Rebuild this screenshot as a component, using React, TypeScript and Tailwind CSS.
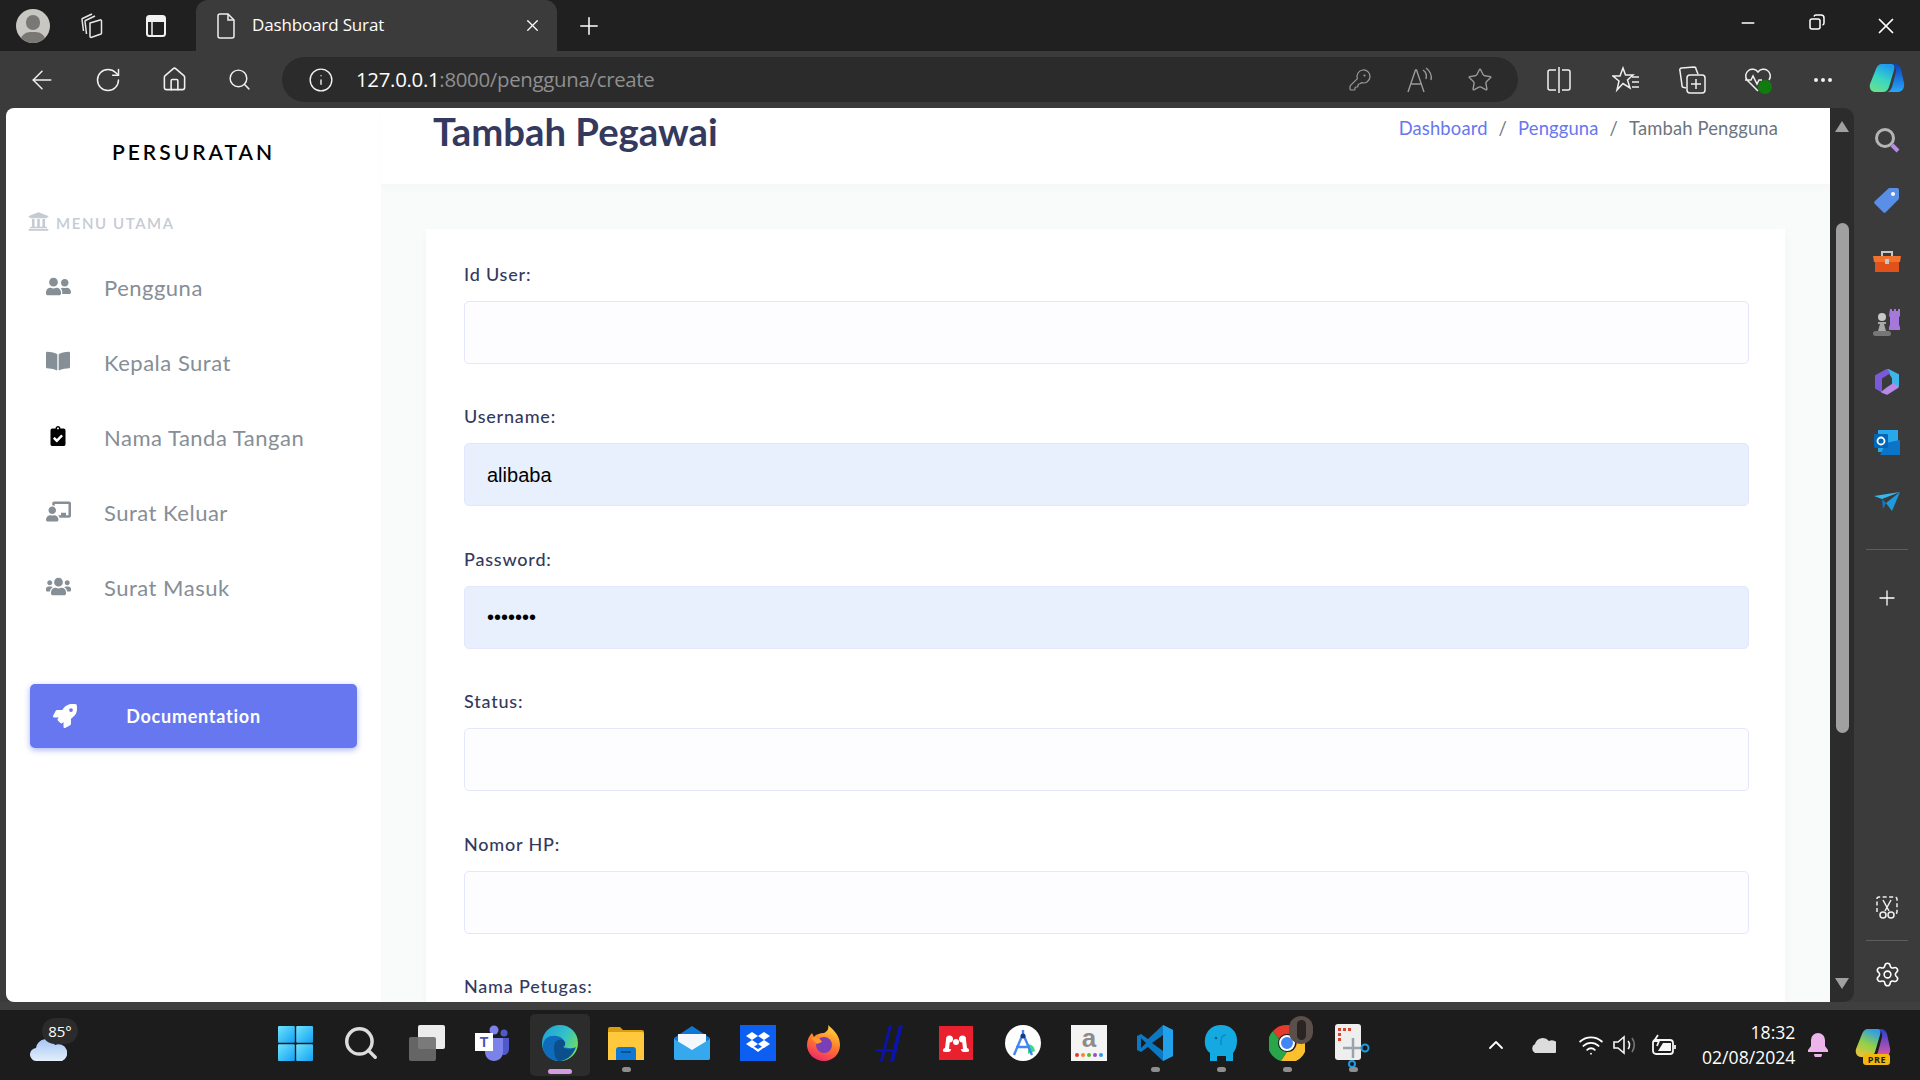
import { ArrowLeft, RotateCw, Home, Search, Info, Plus, X, Minus, Star, KeyRound, Ellipsis, ChevronUp, Wifi, Settings } from 'lucide-react';
import { FaUserFriends, FaBookOpen, FaClipboardCheck, FaChalkboardTeacher, FaUsers, FaRocket, FaUniversity } from 'react-icons/fa';
import type { ReactNode } from 'react';

const nunito = "font-['Lato','Noto_Sans',sans-serif]";
const segoe = "font-['Open_Sans','Noto_Sans',sans-serif]";

function WinLogo() {
    return (
        <svg width="35" height="35" viewBox="0 0 35 35">
            <defs>
                <linearGradient id="w1" x1="0" y1="0" x2="1" y2="1"><stop offset="0" stopColor="#6fe3fb" /><stop offset="1" stopColor="#12a0f5" /></linearGradient>
            </defs>
            <rect x="0" y="0" width="16.8" height="16.8" rx="1" fill="url(#w1)" />
            <rect x="18.2" y="0" width="16.8" height="16.8" rx="1" fill="url(#w1)" />
            <rect x="0" y="18.2" width="16.8" height="16.8" rx="1" fill="url(#w1)" />
            <rect x="18.2" y="18.2" width="16.8" height="16.8" rx="1" fill="url(#w1)" />
        </svg>
    );
}

function TeamsLogo() {
    return (
        <svg width="36" height="36" viewBox="0 0 36 36">
            <circle cx="19" cy="5" r="4.5" fill="#7b83eb" />
            <circle cx="29" cy="8" r="3.5" fill="#5059c9" />
            <path d="M24 13h10v11c0 4-3 6-5 6s-5-2-5-6z" fill="#5059c9" />
            <path d="M10 13h18v14c0 5-4 9-9 9s-9-4-9-9z" fill="#7b83eb" />
            <rect x="0" y="8" width="18" height="18" fill="#fff" />
            <text x="9" y="22" textAnchor="middle" fontSize="14" fontWeight="700" fontFamily="Liberation Sans, sans-serif" fill="#4b53bc">T</text>
        </svg>
    );
}

function EdgeLogo({ size = 36 }: { size?: number }) {
    return (
        <svg width={size} height={size} viewBox="0 0 36 36">
            <defs>
                <linearGradient id="e1" x1="0" y1="0" x2="1" y2="0.6"><stop offset="0" stopColor="#1b9ed8" /><stop offset="0.6" stopColor="#35c1c8" /><stop offset="1" stopColor="#6fdc5d" /></linearGradient>
            </defs>
            <circle cx="18" cy="18" r="18" fill="url(#e1)" />
            <path d="M1 20C2 11 11 9 18 12c6 3 6 9 2 10 6 1 10 2 14 0-3 9-10 14-18 14C8 36 0 29 1 20z" fill="#0f6cbd" />
            <path d="M12 22c0-6 5-9 9-7 3 2 3 6 0 7 3 3 8 3 12 1-3 8-10 13-16 13-4-1-5-8-5-14z" fill="#0c4f8c" />
        </svg>
    );
}

function FolderLogo() {
    return (
        <svg width="36" height="34" viewBox="0 0 36 34">
            <path d="M0 3a2 2 0 0 1 2-2h10l3 3h19a2 2 0 0 1 2 2v4H0z" fill="#d99e0b" />
            <path d="M0 6h34a2 2 0 0 1 2 2v26H0z" fill="#ffc83d" />
            <path d="M8 24a3 3 0 0 1 3-3h14a3 3 0 0 1 3 3v10H8z" fill="#0f78d4" />
            <rect x="13" y="25" width="10" height="2" fill="#0a4f8f" />
        </svg>
    );
}

function MailLogo() {
    return (
        <svg width="36" height="34" viewBox="0 0 36 34">
            <path d="M18 0 36 12v20a2 2 0 0 1-2 2H2a2 2 0 0 1-2-2V12z" fill="#0f78d4" />
            <path d="M4 8h28v12L18 26 4 20z" fill="#f2f8fd" />
            <path d="M0 13l18 11 18-11v19a2 2 0 0 1-2 2H2a2 2 0 0 1-2-2z" fill="#35a8ee" />
        </svg>
    );
}

function DropboxLogo() {
    return (
        <svg width="36" height="36" viewBox="0 0 36 36">
            <rect width="36" height="36" fill="#0d5ff2" />
            <path d="M12 7l6 4-6 4-6-4zM24 7l6 4-6 4-6-4zM12 15l6 4-6 4-6-4zM24 15l6 4-6 4-6-4zM18 24l6-3.5v2L18 27l-6-4.5v-2z" fill="#fff" />
        </svg>
    );
}

function FirefoxLogo() {
    return (
        <svg width="36" height="36" viewBox="0 0 36 36">
            <defs>
                <linearGradient id="f1" x1="0.7" y1="0" x2="0.3" y2="1"><stop offset="0" stopColor="#ffd93b" /><stop offset="0.5" stopColor="#ff7a2b" /><stop offset="1" stopColor="#f0266b" /></linearGradient>
            </defs>
            <path d="M22 0c6 5 12 11 12 20 0 9-7 16-16 16S1 29 1 20c0-5 2-9 5-12l2 4c2-3 7-4 10-4 4-2 5-5 4-8z" fill="url(#f1)" />
            <circle cx="18" cy="20" r="8" fill="#7a3fb8" />
            <path d="M5 13c5-2 9 0 11 4l-5 2z" fill="#ff9a2b" />
        </svg>
    );
}

function HashLogo() {
    return (
        <svg width="28" height="36" viewBox="0 0 28 36">
            <path d="M13 0h3L7 36H4zM23 0h4l-9 36h-4z" fill="#0a14a8" />
            <rect x="0" y="24" width="22" height="2.5" fill="#0a14a8" />
        </svg>
    );
}

function MendeleyLogo() {
    return (
        <svg width="34" height="34" viewBox="0 0 34 34">
            <rect width="34" height="34" fill="#e9202e" />
            <circle cx="17" cy="16" r="3" fill="#fff" />
            <circle cx="10.5" cy="13" r="3.5" fill="#fff" />
            <circle cx="23.5" cy="13" r="3.5" fill="#fff" />
            <path d="M7 14h4l-1 9h2c0 2-1 3-3 3H6c-2 0-2-1-2-2s1-2 2-2zM27 14h-4l1 9h-2c0 2 1 3 3 3h3c2 0 2-1 2-2s-1-2-2-2z" fill="#fff" />
        </svg>
    );
}

function StudioLogo() {
    return (
        <svg width="36" height="36" viewBox="0 0 36 36">
            <circle cx="18" cy="18" r="18" fill="#fff" />
            <path d="M23 19a8 8 0 0 1 7 7l-7 3z" fill="#3ddc84" />
            <path d="M18 5v6M17 11 9 30M19 11l8 19M11 22h14" stroke="#4285f4" strokeWidth="2.4" fill="none" />
            <circle cx="18" cy="11" r="2.5" fill="#1a3a7a" />
        </svg>
    );
}

function AmazonLogo() {
    return (
        <svg width="36" height="36" viewBox="0 0 36 36">
            <rect width="36" height="36" fill="#f4f4f4" />
            <text x="18" y="22" textAnchor="middle" fontSize="26" fontWeight="700" fontFamily="Liberation Sans, sans-serif" fill="#8c8c8c">a</text>
            <circle cx="6" cy="30" r="2" fill="#e8352b" />
            <circle cx="12" cy="30" r="2" fill="#f28c1e" />
            <circle cx="18" cy="30" r="2" fill="#5cb531" />
            <circle cx="24" cy="30" r="2" fill="#9a4bd0" />
            <circle cx="30" cy="30" r="2" fill="#2a9bea" />
        </svg>
    );
}

function VsCodeLogo() {
    return (
        <svg width="36" height="36" viewBox="0 0 36 36">
            <path d="M26 0 36 5v26l-10 5-15-14-7 5-4-2v-14l4-2 7 5z" fill="#0c78c2" />
            <path d="M26 0 36 5v26l-10 5z" fill="#22a0ea" />
            <path d="M26 10 15 18l11 8zM4 13v10l5-5z" fill="#1c1c1c" />
        </svg>
    );
}

function ElephantLogo() {
    return (
        <svg width="34" height="36" viewBox="0 0 34 36">
            <path d="M17 0c9 0 16 6 16 15 0 7-2 11-4 13v8h-7v-5h-9v5H6v-8C3 26 0 21 1 14 2 6 8 0 17 0z" fill="#14a9e0" />
            <circle cx="12" cy="13" r="1.3" fill="#0b5e80" />
            <path d="M22 10c-4 0-6 4-5 10" stroke="#0e8cc0" strokeWidth="1.5" fill="none" />
        </svg>
    );
}

function ChromeLogo() {
    return (
        <div className="relative w-[36px] h-[36px]">
            <svg width="36" height="36" viewBox="0 0 36 36">
                <path d="M18 0a18 18 0 0 1 16 9H18a9 9 0 0 0-8 5L4 6a18 18 0 0 1 14-6z" fill="#e33b2e" />
                <path d="M4 6l6 8a9 9 0 0 0 8 13l-6 9A18 18 0 0 1 4 6z" fill="#2aa64a" />
                <path d="M34 9a18 18 0 0 1-22 27l6-9a9 9 0 0 0 8-14z" fill="#fbc02d" />
                <circle cx="18" cy="18" r="7" fill="#4285f4" stroke="#fff" strokeWidth="2" />
            </svg>
            <div className="absolute -top-[9px] -right-[8px] w-[24px] h-[28px] rounded-full bg-[#5a4f4a] flex items-center justify-center">
                <div className="w-[9px] h-[20px] rounded-full bg-[#2a2422]" />
            </div>
        </div>
    );
}

function SnipLogo() {
    return (
        <svg width="36" height="44" viewBox="0 0 36 44" className="mt-[6px]">
            <rect x="0" y="0" width="26" height="36" rx="3" fill="#eeeeee" />
            <path d="M3 4h3v3H3zM8 4h3v3H8zM13 4h3v3h-3zM3 9h3v3H3zM3 14h3v3H3z" fill="#d9452a" />
            <path d="M18 14v20M8 24h18" stroke="#9aa3ad" strokeWidth="2.5" />
            <circle cx="30" cy="24" r="3.5" fill="none" stroke="#1e9be0" strokeWidth="2" />
            <circle cx="17" cy="40" r="3" fill="none" stroke="#1e9be0" strokeWidth="2" />
        </svg>
    );
}

function WeatherCloud() {
    return (
        <svg width="37" height="24" viewBox="0 0 37 24">
            <defs>
                <linearGradient id="c1" x1="0" y1="0" x2="0" y2="1"><stop offset="0" stopColor="#a5c6f5" /><stop offset="1" stopColor="#e4eefb" /></linearGradient>
            </defs>
            <path d="M7 23a6.5 6.5 0 0 1-1-13 10 10 0 0 1 19-3 8 8 0 0 1 7 16z" fill="url(#c1)" />
        </svg>
    );
}

function CopilotLogo({ pre }: { pre?: boolean }) {
    const id = pre ? 'cp2' : 'cp1';
    return (
        <svg width="36" height="36" viewBox="0 0 36 36">
            <defs>
                <linearGradient id={id} x1="0.6" y1="0" x2="0.2" y2="1">
                    <stop offset="0" stopColor={pre ? '#2f9de8' : '#1f9bee'} />
                    <stop offset="0.5" stopColor={pre ? '#8fd04a' : '#38d6c4'} />
                    <stop offset="1" stopColor={pre ? '#f0c23a' : '#6ee08a'} />
                </linearGradient>
                <linearGradient id={`${id}b`} x1="0.5" y1="0" x2="0.5" y2="1">
                    <stop offset="0" stopColor={pre ? '#2b3fd0' : '#0b3fc0'} />
                    <stop offset="1" stopColor={pre ? '#e458a8' : '#28a8f8'} />
                </linearGradient>
            </defs>
            <path d="M21 2h5c3 0 5 2 6 5l3 14c1 5-2 9-6 9H17c3 0 5-2 6-5l4-15c1-4-2-8-6-8z" fill={`url(#${id}b)`} />
            <path d="M13 2h9c3 0 4 2 3 6l-5 17c-1 3-3 5-6 5H6c-4 0-6-4-5-8L7 7c1-3 3-5 6-5z" fill={`url(#${id})`} />
        </svg>
    );
}

const taskbarApps: { icon: ReactNode; dot?: boolean; active?: boolean }[] = [
    { icon: <WinLogo /> },
    { icon: <Search size={38} strokeWidth={2.2} className="text-[#dcdcdc]" /> },
    {
        icon: (
            <div className="relative w-[36px] h-[36px]">
                <div className="absolute top-0 right-0 w-[27px] h-[24px] bg-[#ececec] rounded-[2px]" />
                <div className="absolute bottom-0 left-0 w-[27px] h-[24px] bg-[#6e6e6e]/90 rounded-[2px]" />
            </div>
        ),
    },
    { icon: <TeamsLogo /> },
    { icon: <EdgeLogo />, active: true },
    { icon: <FolderLogo />, dot: true },
    { icon: <MailLogo /> },
    { icon: <DropboxLogo /> },
    { icon: <FirefoxLogo /> },
    { icon: <HashLogo /> },
    { icon: <MendeleyLogo /> },
    { icon: <StudioLogo /> },
    { icon: <AmazonLogo /> },
    { icon: <VsCodeLogo />, dot: true },
    { icon: <ElephantLogo />, dot: true },
    { icon: <ChromeLogo />, dot: true },
    { icon: <SnipLogo />, dot: true },
];

const menuItems = [
    { label: 'Pengguna', icon: <FaUserFriends size={25} className="text-[#868e96]" /> },
    { label: 'Kepala Surat', icon: <FaBookOpen size={24} className="text-[#868e96]" /> },
    { label: 'Nama Tanda Tangan', icon: <FaClipboardCheck size={20} className="text-black" /> },
    { label: 'Surat Keluar', icon: <FaChalkboardTeacher size={25} className="text-[#868e96]" /> },
    { label: 'Surat Masuk', icon: <FaUsers size={25} className="text-[#868e96]" /> },
];

const fields = [
    { label: 'Id User:', value: '' },
    { label: 'Username:', value: 'alibaba', filled: true },
    { label: 'Password:', value: '•••••••', filled: true },
    { label: 'Status:', value: '' },
    { label: 'Nomor HP:', value: '' },
    { label: 'Nama Petugas:', value: '' },
];

function TabBar() {
    return (
        <div className={`h-[51px] bg-[#202020] flex items-center pl-[2px] text-white ${segoe}`}>
            <div className="w-[62px] flex justify-center">
                <div className="relative w-[34px] h-[34px] rounded-full bg-[#c9c7c2] overflow-hidden">
                    <div className="absolute left-[10px] top-[6px] w-[14px] h-[15px] rounded-full bg-[#7a7875]" />
                    <div className="absolute left-[4px] top-[23px] w-[26px] h-[20px] rounded-full bg-[#7a7875]" />
                </div>
            </div>
            <div className="w-[56px] flex justify-center">
                <svg width="26" height="26" viewBox="0 0 26 26" fill="none" stroke="#e6e6e6" strokeWidth="1.5">
                    <path d="M11 10l10-3a1 1 0 0 1 1.5 1v12a1 1 0 0 1-.5 1l-10 3.5a1 1 0 0 1-1-1z" />
                    <path d="M7.5 21 6 8.5a1 1 0 0 1 .5-1L16 3" />
                    <path d="M4.5 18 3 6.5a1 1 0 0 1 .5-1L13 1" />
                </svg>
            </div>
            <div className="w-[72px] flex justify-center">
                <svg width="24" height="24" viewBox="0 0 24 24" fill="none">
                    <rect x="3" y="2" width="18" height="20" rx="2.5" stroke="#f2f2f2" strokeWidth="2" />
                    <rect x="3" y="2" width="18" height="6" fill="#f2f2f2" />
                    <path d="M8 8v14" stroke="#f2f2f2" strokeWidth="1.5" />
                </svg>
            </div>
            <div className="ml-[4px] w-[361px] h-full bg-[#3b3b3b] rounded-t-[12px] flex items-center pl-[20px] pr-[15px]">
                <svg width="20" height="26" viewBox="0 0 20 26" fill="none" stroke="#eeeeee" strokeWidth="1.5">
                    <path d="M2 3a2 2 0 0 1 2-2h8l6 6v16a2 2 0 0 1-2 2H4a2 2 0 0 1-2-2z" />
                    <path d="M12 1v6h6" />
                </svg>
                <span className="ml-[16px] text-[17px] tracking-[-0.15px] -mt-[1px]">Dashboard Surat</span>
                <X size={19} strokeWidth={1.6} className="ml-auto" />
            </div>
            <div className="w-[64px] flex justify-center">
                <Plus size={28} strokeWidth={1.3} />
            </div>
            <div className="ml-auto flex">
                <div className="w-[69px] flex justify-center"><Minus size={20} strokeWidth={1.6} /></div>
                <div className="w-[69px] flex justify-center">
                    <svg width="18" height="18" viewBox="0 0 18 18" fill="none" stroke="#fff" strokeWidth="1.5">
                        <rect x="2" y="6" width="10" height="10" rx="2" />
                        <path d="M6 3.5A2 2 0 0 1 8 2h5a3 3 0 0 1 3 3v5a2 2 0 0 1-1.5 2" />
                    </svg>
                </div>
                <div className="w-[69px] flex justify-center"><X size={26} strokeWidth={1.6} /></div>
            </div>
        </div>
    );
}

function Toolbar() {
    return (
        <div className={`h-[57px] bg-[#3b3b3b] flex items-start pl-[9px] text-[#f0f0f0] ${segoe}`}>
            <div className="flex h-[45px] mt-[6px] items-center">
                <div className="w-[66px] flex justify-center"><ArrowLeft size={30} strokeWidth={1.2} /></div>
                <div className="w-[66px] flex justify-center"><RotateCw size={28} strokeWidth={1.3} /></div>
                <div className="w-[66px] flex justify-center"><Home size={27} strokeWidth={1.4} /></div>
                <div className="w-[66px] flex justify-center -ml-[1px]"><Search size={25} strokeWidth={1.4} /></div>
            </div>
            <div className="ml-[10px] mt-[6px] w-[1236px] h-[45px] rounded-full bg-[#2b2b2b] flex items-center pl-[26px] pr-[8px]">
                <Info size={26} strokeWidth={1.3} />
                <span className="ml-[22px] text-[20.4px] tracking-[-0.3px] text-[#8f8f8f]"><span className="text-white">127.0.0.1</span>:8000/pengguna/create</span>
                <div className="ml-auto flex items-center text-[#9a9a9a]">
                    <div className="w-[60px] flex justify-center"><KeyRound size={24} strokeWidth={1.2} /></div>
                    <div className="w-[60px] flex justify-center">
                        <svg width="28" height="26" viewBox="0 0 28 26" fill="none" stroke="#9a9a9a" strokeWidth="1.4">
                            <path d="M2 25 9.5 3h1L18 25M5 17h11" />
                            <path d="M17 3c3 2 4 5 3 9M20 1c4 3 6 7 5 12" />
                        </svg>
                    </div>
                    <div className="w-[60px] flex justify-center"><Star size={26} strokeWidth={1.3} /></div>
                </div>
            </div>
            <div className="ml-[7px] mt-[6px] h-[45px] flex items-center">
                <div className="w-[68px] flex justify-center">
                    <svg width="26" height="28" viewBox="0 0 26 28" fill="none" stroke="#f0f0f0" strokeWidth="1.5">
                        <path d="M10 4H4a2 2 0 0 0-2 2v16a2 2 0 0 0 2 2h6M16 4h6a2 2 0 0 1 2 2v16a2 2 0 0 1-2 2h-6M13 1v26" />
                    </svg>
                </div>
                <div className="w-[65px] flex justify-center">
                    <svg width="28" height="28" viewBox="0 0 28 28" fill="none" stroke="#f0f0f0" strokeWidth="1.5">
                        <path d="M11 2l2.5 7H21l-5.5 5 2.5 8-7-4.5L5 24l2-9-6-5h7z" />
                        <path d="M20 11h7M20 16h7M20 21h7" />
                    </svg>
                </div>
                <div className="w-[67px] flex justify-center">
                    <svg width="28" height="30" viewBox="0 0 28 30" fill="none" stroke="#f0f0f0" strokeWidth="1.5">
                        <rect x="9" y="10" width="18" height="18" rx="3" />
                        <path d="M18 14v10M13 19h10M8 23l-2-.6a2 2 0 0 1-2-2L2 6a2 2 0 0 1 2-3l12-1a2 2 0 0 1 2 2l2 5" />
                    </svg>
                </div>
                <div className="w-[65px] flex justify-center">
                    <div className="relative w-[28px] h-[28px]">
                        <svg width="28" height="28" viewBox="0 0 28 28" fill="none" stroke="#f0f0f0" strokeWidth="1.5">
                            <path d="M14 25 3 14a6.5 6.5 0 0 1 11-8 6.5 6.5 0 0 1 11 8M1 14h6l2-4 4 8 2-4h3" />
                        </svg>
                        <div className="absolute right-0 bottom-0 w-[14px] h-[14px] rounded-full bg-[#107c10]" />
                    </div>
                </div>
                <div className="w-[65px] flex justify-center"><Ellipsis size={24} strokeWidth={2} /></div>
                <div className="w-[63px] flex justify-center"><CopilotLogo /></div>
            </div>
        </div>
    );
}

function Sidebar() {
    return (
        <aside className={`w-[375px] shrink-0 bg-white flex flex-col ${nunito}`}>
            <div className="h-[88px] flex items-center justify-center text-[21px] font-semibold tracking-[3px] text-black">PERSURATAN</div>
            <div className="pl-[22px] h-[34px] mt-[10px] flex items-center gap-[7px] text-[15px] font-semibold tracking-[1.6px] text-[#c5cbd3]">
                <FaUniversity size={21} className="-mt-[3px]" />
                <span>MENU UTAMA</span>
            </div>
            <nav className="mt-[10px] flex flex-col">
                {menuItems.map((item) => (
                    <div key={item.label} className="h-[75px] flex items-center">
                        <div className="w-[98px] pl-[39px] -mt-[3px]">
                            <div className="w-[26px] flex justify-center">{item.icon}</div>
                        </div>
                        <span className="text-[22px] tracking-[0.5px] text-[#868e96]">{item.label}</span>
                    </div>
                ))}
            </nav>
            <div className="mt-[59px] ml-[24px] w-[327px] h-[64px] rounded-[5px] bg-[#6777ef] shadow-[0_2px_6px_#acb5f6] flex items-center justify-center relative text-white">
                <FaRocket size={24} className="absolute left-[23px]" />
                <span className="text-[18px] font-bold tracking-[0.75px]">Documentation</span>
            </div>
        </aside>
    );
}

function MainContent() {
    return (
        <main className={`flex-1 min-w-0 bg-[#f9fbfb] flex flex-col ${nunito}`}>
            <header className="h-[76px] shrink-0 bg-white shadow-[0_4px_8px_rgba(0,0,0,0.02)] flex items-start justify-between pl-[52px] pr-[52px]">
                <h1 className="mt-[1px] text-[38.3px] leading-[44px] font-bold text-[#34395e]">Tambah Pegawai</h1>
                <div className="mt-[8px] flex text-[18.4px] tracking-[0.15px] leading-[24px] text-[#6c757d]">
                    <span className="text-[#6777ef]">Dashboard</span>
                    <span className="mx-[11px]">/</span>
                    <span className="text-[#6777ef]">Pengguna</span>
                    <span className="mx-[11px]">/</span>
                    <span>Tambah Pengguna</span>
                </div>
            </header>
            <section className="mt-[45px] mx-[45px] flex-1 bg-white shadow-[0_4px_8px_rgba(0,0,0,0.03)] pl-[38px] pr-[36px] pt-[33px] overflow-hidden">
                {fields.map((field) => (
                    <div key={field.label} className="mb-[40.4px]">
                        <div className="h-[24px] mb-[15px] text-[18px] leading-[24px] font-medium tracking-[0.8px] text-[#34395e]">{field.label}</div>
                        <div className={`h-[63px] rounded-[5px] border border-[#e4e6fc] flex items-center pl-[22px] text-black text-[20px] font-['Liberation_Sans',sans-serif] ${field.filled ? 'bg-[#e8f0fe]' : 'bg-[#fdfdff]'}`}>
                            {field.value}
                        </div>
                    </div>
                ))}
            </section>
        </main>
    );
}

function Scrollbar() {
    return (
        <div className="w-[24px] shrink-0 bg-[#2c2c2c] rounded-r-[10px] flex flex-col items-center relative">
            <div className="mt-[13px] w-0 h-0 border-x-[7px] border-x-transparent border-b-[11px] border-b-[#a0a0a0]" />
            <div className="mt-[91px] w-[13px] h-[510px] rounded-full bg-[#a0a0a0]" />
            <div className="mt-auto mb-[13px] w-0 h-0 border-x-[7px] border-x-transparent border-t-[11px] border-t-[#a0a0a0]" />
        </div>
    );
}

function EdgeSidebar() {
    return (
        <div className="w-[66px] shrink-0 bg-[#3b3b3b] flex flex-col items-center text-white">
            <div className="mt-[2px] flex flex-col items-center">
                <div className="h-[60px] flex items-center justify-center">
                    <svg width="26" height="26" viewBox="0 0 26 26" fill="none">
                        <circle cx="11" cy="11" r="8.5" stroke="#b5b5b5" strokeWidth="3" />
                        <path d="M18 18l6 6" stroke="#b98ae8" strokeWidth="4" />
                    </svg>
                </div>
                <div className="h-[60px] flex items-center justify-center">
                    <svg width="26" height="26" viewBox="0 0 26 26">
                        <path d="M15 1h8a2 2 0 0 1 2 2v8a2 2 0 0 1-.6 1.5L12 25a2 2 0 0 1-3 0L1 17a2 2 0 0 1 0-3z" fill="#5a8fe8" />
                        <circle cx="19" cy="7" r="2" fill="#fff" />
                    </svg>
                </div>
                <div className="h-[61px] flex items-center justify-center">
                    <svg width="28" height="22" viewBox="0 0 28 22">
                        <path d="M9 6V2h10v4" fill="none" stroke="#c8c8c8" strokeWidth="2" />
                        <path d="M0 6h28l-1 6H1z" fill="#f0722c" />
                        <path d="M2 12h24v10H2z" fill="#e0521a" />
                        <rect x="12" y="9" width="4" height="5" fill="#c8c8c8" />
                    </svg>
                </div>
                <div className="h-[61px] flex items-center justify-center">
                    <svg width="28" height="28" viewBox="0 0 28 28">
                        <path d="M17 1h2v2h2V1h2v2h2V1h2v7l-1 1v8l1 2v3H16v-3l1-2V9l-1-1z" fill="#a678dc" />
                        <circle cx="9" cy="9" r="4" fill="#c8c8c8" />
                        <path d="M5 14h8v2H11l2 7H5l2-7H5z" fill="#a8a8a8" />
                        <rect x="0" y="23" width="18" height="5" rx="2.5" fill="#777" />
                    </svg>
                </div>
                <div className="h-[60px] flex items-center justify-center">
                    <svg width="26" height="28" viewBox="0 0 26 28" strokeLinejoin="round">
                        <path d="M14 2 24 7v11l-5 3V10z" fill="#3fb5e8" stroke="#3fb5e8" strokeWidth="2" />
                        <path d="M13 2 2 8v12l5 3V10l8-5z" fill="#7a5ad8" stroke="#7a5ad8" strokeWidth="2" />
                        <path d="M8 24l5 2 11-7-5-3-6 4z" fill="#b58ae8" stroke="#b58ae8" strokeWidth="1.5" />
                    </svg>
                </div>
                <div className="h-[60px] flex items-center justify-center">
                    <svg width="26" height="26" viewBox="0 0 26 26">
                        <rect x="4" y="1" width="20" height="22" fill="#28a8ea" />
                        <path d="M12 14l14-3v15H6z" fill="#0a74c6" />
                        <rect x="0" y="5" width="14" height="14" rx="1" fill="#0067b8" />
                        <circle cx="7" cy="12" r="3.5" fill="none" stroke="#fff" strokeWidth="1.8" />
                    </svg>
                </div>
                <div className="h-[60px] flex items-center justify-center">
                    <svg width="26" height="20" viewBox="0 0 26 20">
                        <path d="M0 4 26 0 8 7z" fill="#35b8f0" />
                        <path d="M26 0 18 19 12 11z" fill="#1e9be0" />
                        <path d="M8 7l4 4-3 6z" fill="#1478c0" />
                    </svg>
                </div>
            </div>
            <div className="mt-[17px] w-[42px] h-px bg-[#5d5d5d]" />
            <div className="mt-[36px]"><Plus size={24} strokeWidth={1.3} /></div>
            <div className="mt-auto">
                <svg width="26" height="24" viewBox="0 0 26 24" fill="none" stroke="#f0f0f0" strokeWidth="1.5">
                    <path d="M3 16V3a2 2 0 0 1 2-2h16a2 2 0 0 1 2 2v13a2 2 0 0 1-2 2" strokeDasharray="4 2.5" />
                    <path d="M9 4l6 11M17 4l-6 11" />
                    <circle cx="9" cy="19" r="3" />
                    <circle cx="17" cy="19" r="3" />
                </svg>
            </div>
            <div className="mt-[20px] w-[42px] h-px bg-[#5d5d5d]" />
            <div className="mt-[20px] mb-[14px]"><Settings size={27} strokeWidth={1.4} /></div>
        </div>
    );
}

function Taskbar() {
    return (
        <div className={`h-[70px] bg-[#1c1c1c] flex items-center text-white ${segoe}`}>
            <div className="w-[262px] shrink-0 h-full relative">
                <div className="absolute left-[30px] top-[28px]"><WeatherCloud /></div>
                <div className="absolute left-[42px] top-[8px] w-[36px] h-[26px] rounded-full bg-[#2b2b2b] flex items-center justify-center text-[15px]">85°</div>
            </div>
            <div className="flex h-full">
                {taskbarApps.map((app, i) => (
                    <div key={i} className="w-[66.15px] h-full relative flex items-center justify-center">
                        {app.active && <div className="absolute inset-x-[3px] top-[4px] bottom-[4px] rounded-[5px] bg-[#2c2c2c]" />}
                        <div className="relative -mt-[4px] flex items-center justify-center">{app.icon}</div>
                        {app.active && <div className="absolute bottom-[6px] left-[21px] w-[24px] h-[5px] rounded-full bg-[#d39be0]" />}
                        {app.dot && <div className="absolute bottom-[8px] left-[29px] w-[9px] h-[5px] rounded-full bg-[#8e8e8e]" />}
                    </div>
                ))}
            </div>
            <div className="flex items-center ml-[98px] flex-1">
                <ChevronUp size={24} strokeWidth={1.8} />
                <svg className="ml-[22px]" width="26" height="16" viewBox="0 0 26 16"><path d="M5 16a5 5 0 0 1 0-9 8 8 0 0 1 14-3 6 6 0 0 1 6 12z" fill="#dcdcdc" /></svg>
                <Wifi size={26} strokeWidth={1.7} className="ml-[22px]" />
                <svg className="ml-[8px]" width="25" height="24" viewBox="0 0 25 24" fill="none" stroke="#f5f5f5" strokeWidth="1.6">
                    <path d="M2 9v6h4l6 5V4L6 9z" />
                    <path d="M16 8c2 2 2 6 0 8" />
                    <path d="M20 5c3 4 3 10 0 14" stroke="#777" />
                </svg>
                <svg className="ml-[14px]" width="26" height="22" viewBox="0 0 26 22" fill="none" stroke="#f5f5f5" strokeWidth="1.8">
                    <rect x="2" y="6" width="20" height="14" rx="3" />
                    <path d="M24 11v4" />
                    <path d="M7 1 3 7h5l-2 5" />
                    <path d="M7 17h13V9h-8z" fill="#f5f5f5" stroke="none" />
                </svg>
                <div className="ml-[13px] w-[105px] text-right text-[17.6px] leading-[25px] whitespace-nowrap">
                    <div>18:32</div>
                    <div>02/08/2024</div>
                </div>
                <svg className="ml-[12px]" width="22" height="24" viewBox="0 0 22 24"><path d="M11 0a7 7 0 0 1 7 7v6l3 4v2H1v-2l3-4V7a7 7 0 0 1 7-7zM7 21h8a4 4 0 0 1-8 0z" fill="#ecb4ea" /></svg>
                <div className="ml-[26px] relative w-[36px] h-[36px]">
                    <CopilotLogo pre />
                    <div className="absolute -bottom-[2px] left-[8px] w-[27px] h-[11px] rounded-[3px] bg-[#f3b70e] text-[#1c1c1c] text-[9px] font-bold leading-[11px] text-center tracking-[0.5px]">PRE</div>
                </div>
            </div>
        </div>
    );
}

export default function App() {
    return (
        <div className="w-[1920px] h-[1080px] overflow-hidden flex flex-col bg-[#3b3b3b]">
            <TabBar />
            <Toolbar />
            <div className="h-[894px] flex pl-[6px]">
                <div className="w-[1824px] flex rounded-l-[8px] overflow-hidden">
                    <Sidebar />
                    <MainContent />
                </div>
                <Scrollbar />
                <EdgeSidebar />
            </div>
            <div className="h-[8px] bg-[#3f3f3f]" />
            <Taskbar />
        </div>
    );
}
